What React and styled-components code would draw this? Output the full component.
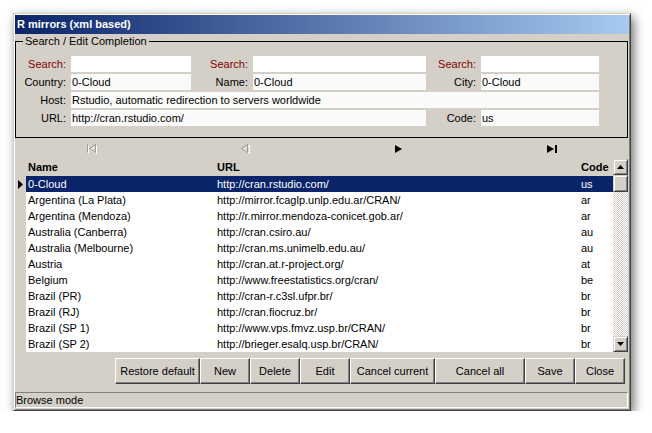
import styled, { createGlobalStyle } from "styled-components";

const GlobalStyle = createGlobalStyle`
  html, body {
    margin: 0;
    padding: 0;
    background: #ffffff;
  }
  body {
    font-family: "Liberation Sans", Arial, sans-serif;
    font-size: 11px;
    color: #000;
  }
  * {
    box-sizing: border-box;
  }
`;

const Window = styled.div`
  margin: 13px 0 0 13px;
  width: 618px;
  background: #d4d0c8;
  border: 1px solid;
  border-color: #d4d0c8 #404040 #404040 #d4d0c8;
  box-shadow: inset 1px 1px #ffffff, inset -1px -1px #808080,
    3px 4px 10px rgba(0, 0, 0, 0.55);
  padding: 1px 1px 2px 1px;
  display: flex;
  flex-direction: column;
`;

const TitleBar = styled.div`
  height: 19px;
  line-height: 19px;
  padding-left: 2px;
  color: #ffffff;
  font-weight: bold;
  font-size: 11px;
  background: linear-gradient(to right, #0a246a, #a6caf0);
`;

const Group = styled.fieldset`
  margin: 1px 1px 0 0;
  padding: 8px 0 11px 0;
  border: 1px solid #000;
  min-width: 0;
`;

const Legend = styled.legend`
  margin-left: 7px;
  padding: 0 2px;
  line-height: 13px;
  font-size: 11px;
`;

const FieldGrid = styled.div`
  display: grid;
  grid-template-columns: 50px 120px 52px 173px 45px 118px;
  grid-auto-rows: 16px;
  column-gap: 5px;
  row-gap: 2px;
`;

const Label = styled.div`
  text-align: right;
  line-height: 16px;
  white-space: nowrap;
  color: ${(p) => (p.$search ? "#800000" : "#000")};
`;

const Field = styled.input`
  height: 16px;
  border: none;
  outline: none;
  padding: 0 1px;
  margin: 0;
  font-family: "Liberation Sans", Arial, sans-serif;
  font-size: 11px;
  color: #000;
  min-width: 0;
  background: ${(p) => (p.$search ? "#ffffff" : "#fafafa")};
  grid-column: ${(p) => p.$span || "auto"};
`;

const Navigator = styled.div`
  display: flex;
  height: 21px;
`;

const NavButton = styled.div`
  flex: 1;
  display: flex;
  align-items: center;
  justify-content: center;
  padding-top: 1px;
`;

const DataGrid = styled.div`
  display: flex;
  margin-right: 1px;
`;

const Table = styled.div`
  flex: 1;
  display: flex;
  flex-direction: column;
`;

const Row = styled.div`
  display: flex;
  height: ${(p) => (p.$header ? "17px" : "16px")};
  line-height: ${(p) => (p.$header ? "17px" : "16px")};
  font-weight: ${(p) => (p.$header ? "bold" : "normal")};
`;

const Indicator = styled.div`
  width: 11px;
  background: #d4d0c8;
  display: flex;
  align-items: center;
  justify-content: flex-end;
  padding-right: 3px;
`;

const Cells = styled.div`
  flex: 1;
  display: flex;
  background: ${(p) =>
    p.$header ? "#d4d0c8" : p.$selected ? "#0a246a" : "#ffffff"};
  color: ${(p) => (p.$selected ? "#ffffff" : "#000")};
`;

const Cell = styled.div`
  width: ${(p) => p.$w || "auto"};
  flex: ${(p) => (p.$w ? "none" : 1)};
  padding-left: 2px;
  white-space: nowrap;
  overflow: hidden;
`;

const ScrollBar = styled.div`
  width: 15px;
  display: flex;
  flex-direction: column;
  background: repeating-conic-gradient(#d4d0c8 0 25%, #ffffff 0 50%) 0 0 / 2px
    2px;
`;

const ScrollButton = styled.div`
  height: ${(p) => p.$h || "16px"};
  background: #d4d0c8;
  border: 1px solid;
  border-color: #d4d0c8 #404040 #404040 #d4d0c8;
  box-shadow: inset 1px 1px #ffffff, inset -1px -1px #808080;
  display: flex;
  align-items: center;
  justify-content: center;
`;

const Track = styled.div`
  flex: 1;
`;

const ButtonBar = styled.div`
  display: flex;
  justify-content: flex-end;
  margin-top: 6px;
  padding-right: 4px;
`;

const Button = styled.div`
  width: ${(p) => p.$w}px;
  height: 26px;
  line-height: 24px;
  text-align: center;
  background: #d4d0c8;
  border: 1px solid;
  border-color: #ffffff #404040 #404040 #ffffff;
  box-shadow: inset -1px -1px #808080;
`;

const StatusBar = styled.div`
  margin: 8px 1px 0 0;
  height: 16px;
  line-height: 14px;
  border: 1px solid;
  border-color: #808080 #ffffff #ffffff #808080;
`;

const Arrow = ({ up }) => (
  <svg width="7" height="4" viewBox="0 0 7 4">
    <path d={up ? "M3.5 0 L7 4 L0 4 Z" : "M0 0 L7 0 L3.5 4 Z"} fill="#000" />
  </svg>
);

const FirstIcon = () => (
  <svg width="12" height="10" viewBox="0 0 12 10">
    <g fill="none" stroke="#ffffff" transform="translate(1 1)">
      <path d="M1.5 0.5 V8.5" />
      <path d="M9.5 0.5 L3.5 4.5 L9.5 8.5 Z" />
    </g>
    <g fill="none" stroke="#9a9a9a">
      <path d="M1.5 0.5 V8.5" />
      <path d="M9.5 0.5 L3.5 4.5 L9.5 8.5 Z" />
    </g>
  </svg>
);

const PrevIcon = () => (
  <svg width="10" height="10" viewBox="0 0 10 10">
    <path
      d="M8.5 1.5 L2.5 5.5 L8.5 9.5 Z"
      fill="none"
      stroke="#ffffff"
      transform="translate(1 0)"
    />
    <path d="M7.5 0.5 L1.5 4.5 L7.5 8.5 Z" fill="none" stroke="#9a9a9a" />
  </svg>
);

const NextIcon = () => (
  <svg width="8" height="8" viewBox="0 0 8 8">
    <path d="M0 0 L7 4 L0 8 Z" fill="#000" />
  </svg>
);

const LastIcon = () => (
  <svg width="11" height="8" viewBox="0 0 11 8">
    <path d="M0 0 L7 4 L0 8 Z" fill="#000" />
    <rect x="8" y="0" width="2" height="8" fill="#000" />
  </svg>
);

const Pointer = () => (
  <svg width="5" height="9" viewBox="0 0 5 9">
    <path d="M0 0 L5 4.5 L0 9 Z" fill="#000" />
  </svg>
);

const mirrors = [
  ["0-Cloud", "http://cran.rstudio.com/", "us"],
  ["Argentina (La Plata)", "http://mirror.fcaglp.unlp.edu.ar/CRAN/", "ar"],
  ["Argentina (Mendoza)", "http://r.mirror.mendoza-conicet.gob.ar/", "ar"],
  ["Australia (Canberra)", "http://cran.csiro.au/", "au"],
  ["Australia (Melbourne)", "http://cran.ms.unimelb.edu.au/", "au"],
  ["Austria", "http://cran.at.r-project.org/", "at"],
  ["Belgium", "http://www.freestatistics.org/cran/", "be"],
  ["Brazil (PR)", "http://cran-r.c3sl.ufpr.br/", "br"],
  ["Brazil (RJ)", "http://cran.fiocruz.br/", "br"],
  ["Brazil (SP 1)", "http://www.vps.fmvz.usp.br/CRAN/", "br"],
  ["Brazil (SP 2)", "http://brieger.esalq.usp.br/CRAN/", "br"],
];

const buttons = [
  ["Restore default", 85],
  ["New", 50],
  ["Delete", 50],
  ["Edit", 50],
  ["Cancel current", 85],
  ["Cancel all", 90],
  ["Save", 50],
  ["Close", 50],
];

export default function App() {
  return (
    <>
      <GlobalStyle />
      <Window>
        <TitleBar>R mirrors (xml based)</TitleBar>

        <Group>
          <Legend>Search / Edit Completion</Legend>
          <FieldGrid>
            <Label $search>Search:</Label>
            <Field $search readOnly value="" />
            <Label $search>Search:</Label>
            <Field $search readOnly value="" />
            <Label $search>Search:</Label>
            <Field $search readOnly value="" />

            <Label>Country:</Label>
            <Field readOnly value="0-Cloud" />
            <Label>Name:</Label>
            <Field readOnly value="0-Cloud" />
            <Label>City:</Label>
            <Field readOnly value="0-Cloud" />

            <Label>Host:</Label>
            <Field
              $span="2 / 7"
              readOnly
              value="Rstudio, automatic redirection to servers worldwide"
            />

            <Label>URL:</Label>
            <Field $span="2 / 5" readOnly value="http://cran.rstudio.com/" />
            <Label>Code:</Label>
            <Field readOnly value="us" />
          </FieldGrid>
        </Group>

        <Navigator>
          <NavButton>
            <FirstIcon />
          </NavButton>
          <NavButton>
            <PrevIcon />
          </NavButton>
          <NavButton>
            <NextIcon />
          </NavButton>
          <NavButton>
            <LastIcon />
          </NavButton>
        </Navigator>

        <DataGrid>
          <Table>
            <Row $header>
              <Indicator />
              <Cells $header>
                <Cell $w="189px">Name</Cell>
                <Cell $w="364px">URL</Cell>
                <Cell>Code</Cell>
              </Cells>
            </Row>
            {mirrors.map(([name, url, code], i) => (
              <Row key={name}>
                <Indicator>{i === 0 && <Pointer />}</Indicator>
                <Cells $selected={i === 0}>
                  <Cell $w="189px">{name}</Cell>
                  <Cell $w="364px">{url}</Cell>
                  <Cell>{code}</Cell>
                </Cells>
              </Row>
            ))}
          </Table>
          <ScrollBar>
            <ScrollButton>
              <Arrow up />
            </ScrollButton>
            <ScrollButton $h="17px" />
            <Track />
            <ScrollButton>
              <Arrow />
            </ScrollButton>
          </ScrollBar>
        </DataGrid>

        <ButtonBar>
          {buttons.map(([label, w]) => (
            <Button key={label} $w={w}>
              {label}
            </Button>
          ))}
        </ButtonBar>

        <StatusBar>Browse mode</StatusBar>
      </Window>
    </>
  );
}
